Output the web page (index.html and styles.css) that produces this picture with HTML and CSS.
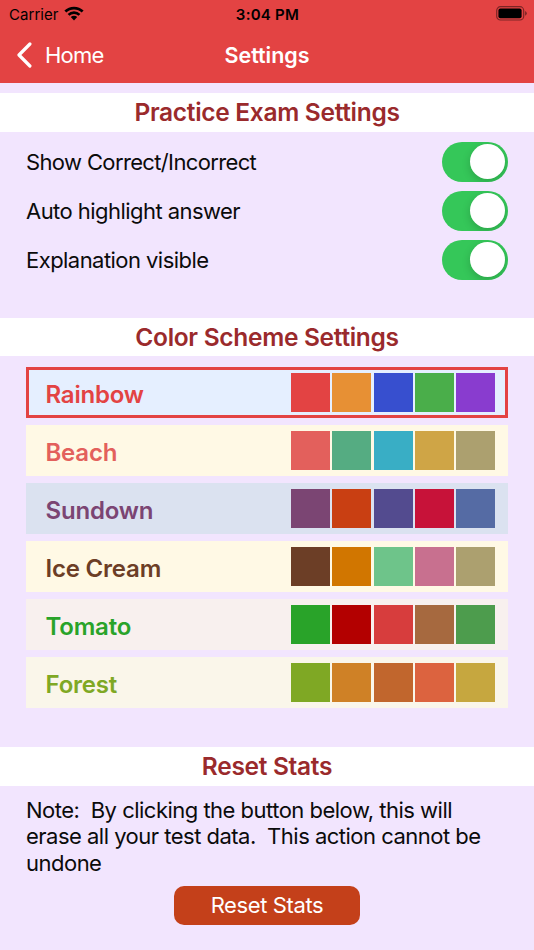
FILE: index.html
```html
<!DOCTYPE html>
<html lang="en">
<head>
<meta charset="UTF-8">
<title>Settings</title>
<link rel="stylesheet" href="styles.css">
</head>

<body>
<div class="top">
  <div class="status">
    <div class="carrier">
      <span>Carrier</span>
      <svg class="wifi" width="20" height="15" viewBox="0 0 20 15">
        <path d="M0.4 4.6 A13.6 13.6 0 0 1 19.6 4.6 L17.7 6.6 A10.9 10.9 0 0 0 2.3 6.6 Z"/>
        <path d="M3.6 7.9 A9.1 9.1 0 0 1 16.4 7.9 L14.5 9.8 A6.4 6.4 0 0 0 5.5 9.8 Z"/>
        <path d="M6.8 11.1 A4.6 4.6 0 0 1 13.2 11.1 L10 14.4 Z"/>
      </svg>
    </div>
    <div class="time">3:04 PM</div>
    <svg class="battery" width="32" height="15" viewBox="0 0 32 15">
      <rect x="0.7" y="0.7" width="27" height="13.3" rx="3.8" fill="none" stroke="#000" stroke-opacity=".45" stroke-width="1.2"/>
      <rect x="2.4" y="2.4" width="23.2" height="9.9" rx="2" fill="#000"/>
      <path d="M29.2 5 A2.6 2.6 0 0 1 29.2 9.7 Z" fill="#000" fill-opacity=".5"/>
    </svg>
  </div>
  <div class="nav">
    <div class="back">
      <svg width="16" height="26" viewBox="0 0 16 26">
        <path d="M13.9 2 L3 13 L13.9 24" fill="none" stroke="#fff" stroke-width="3.2" stroke-linecap="round" stroke-linejoin="round"/>
      </svg>
      <span>Home</span>
    </div>
    <h1>Settings</h1>
  </div>
</div>

<h2>Practice Exam Settings</h2>
<ul class="options">
  <li><span class="correct">Show Correct/Incorrect</span><i class="switch"></i></li>
  <li><span>Auto highlight answer</span><i class="switch"></i></li>
  <li><span>Explanation visible</span><i class="switch"></i></li>
</ul>

<h2 class="h-color">Color Scheme Settings</h2>
<ul class="schemes">
  <li class="rainbow selected"><span>Rainbow</span><div class="colors"><i></i><i></i><i></i><i></i><i></i></div></li>
  <li class="beach"><span>Beach</span><div class="colors"><i></i><i></i><i></i><i></i><i></i></div></li>
  <li class="sundown"><span>Sundown</span><div class="colors"><i></i><i></i><i></i><i></i><i></i></div></li>
  <li class="icecream"><span>Ice Cream</span><div class="colors"><i></i><i></i><i></i><i></i><i></i></div></li>
  <li class="tomato"><span>Tomato</span><div class="colors"><i></i><i></i><i></i><i></i><i></i></div></li>
  <li class="forest"><span>Forest</span><div class="colors"><i></i><i></i><i></i><i></i><i></i></div></li>
</ul>

<h2 class="h-reset">Reset Stats</h2>
<p class="note">Note:&nbsp; By clicking the button below, this will<br>erase all your test data.&nbsp; This action cannot be<br>undone</p>
<button class="reset">Reset Stats</button>
</body>
</html>
```

FILE: styles.css
```css
*{ box-sizing:border-box; margin:0; padding:0;}
body{ width:534px; height:950px; overflow:hidden; background:#f2e5fe; color:#0b0b0b; font-family:Inter, "Liberation Sans", sans-serif; font-size:22px;}
ul{ list-style:none;}
i{ display:block;}

/* header */
.top{ height:83px; background:#e34343; color:#fff;}
.status{ display:grid; grid-template-columns:1fr auto 1fr; height:28px; padding:0 6px 0 9px; align-items:center; color:#000; font-size:15px;}
.carrier{ display:flex; gap:5px; align-items:center; letter-spacing:.05px;}
.wifi{ margin-top:-2px;}
.time{ margin-left:-2px; font-weight:600; font-size:15px; letter-spacing:.25px;}
.battery{ justify-self:end; margin-top:-1px;}
.nav{ display:grid; grid-template-columns:1fr auto 1fr; height:53px; padding:0 16px; align-items:center;}
.back{ display:flex; gap:13px; align-items:center; letter-spacing:-.8px;}
h1{ font-size:21.5px; font-weight:600; letter-spacing:-.05px;}

h2{ height:39px; margin-top:10px; background:#fff; color:#9a2a2c; font-size:24.5px; font-weight:600; line-height:39px; text-align:center; letter-spacing:-.3px;}

/* switches */
.options{ padding:10px 26px 0;}
.options li{ display:flex; justify-content:space-between; align-items:center; height:40px; margin-bottom:9px; letter-spacing:-.55px;}
.options span{ padding-bottom:1px;}
.options .correct{ letter-spacing:-.64px;}
.switch{ width:66px; height:40px; padding:2.4px 2.8px; border-radius:20px; background:#35c759; overflow:hidden;}
.switch:after{ content:""; display:block; width:35px; height:35px; margin-left:auto; border-radius:50%; background:#fff; box-shadow:0 3px 9px rgba(0,0,0,.18);}

/* color schemes */
.h-color{ margin-top:37.7px; height:38.5px; line-height:38.5px;}
.schemes{ padding:10.4px 26px 0;}
.schemes li{ display:flex; justify-content:space-between; align-items:center; height:51.4px; margin-bottom:6.6px; padding:0 13px 0 20px; font-size:24px; font-weight:600; letter-spacing:-.2px;}
.schemes span{ padding-top:4px; margin-left:-.5px;}
.schemes li.selected{ border:3px solid #e34343; padding:0 10px 0 17px;}
.colors{ display:flex; gap:2.2px;}
.colors i{ width:39px; height:39px;}

.rainbow{ background:#e5efff; color:#e34343;}
.rainbow i:nth-child(1){ background:#e34343;}
.rainbow i:nth-child(2){ background:#e79034;}
.rainbow i:nth-child(3){ background:#374fcf;}
.rainbow i:nth-child(4){ background:#4aae4a;}
.rainbow i:nth-child(5){ background:#893ccf;}

.beach{ background:#fff9e5; color:#e3605c;}
.beach i:nth-child(1){ background:#e3605c;}
.beach i:nth-child(2){ background:#55ac82;}
.beach i:nth-child(3){ background:#39aec5;}
.beach i:nth-child(4){ background:#cfa546;}
.beach i:nth-child(5){ background:#aca06f;}

.sundown{ background:#dbe2f0; color:#7b4573;}
.sundown i:nth-child(1){ background:#7b4573;}
.sundown i:nth-child(2){ background:#c93f12;}
.sundown i:nth-child(3){ background:#534b8f;}
.sundown i:nth-child(4){ background:#c71239;}
.sundown i:nth-child(5){ background:#556ba4;}

.icecream{ background:#fff9e5; color:#6c3e26;}
.icecream i:nth-child(1){ background:#6c3e26;}
.icecream i:nth-child(2){ background:#d17600;}
.icecream i:nth-child(3){ background:#6ec48a;}
.icecream i:nth-child(4){ background:#c8708f;}
.icecream i:nth-child(5){ background:#aca06f;}

.tomato{ background:#f8f0ee; color:#29a329;}
.tomato i:nth-child(1){ background:#29a329;}
.tomato i:nth-child(2){ background:#b30000;}
.tomato i:nth-child(3){ background:#d73d3d;}
.tomato i:nth-child(4){ background:#a6693f;}
.tomato i:nth-child(5){ background:#4d9c4d;}

.forest{ background:#faf6ea; color:#7fa824;}
.forest i:nth-child(1){ background:#7fa824;}
.forest i:nth-child(2){ background:#cf8126;}
.forest i:nth-child(3){ background:#c1662d;}
.forest i:nth-child(4){ background:#dc633f;}
.forest i:nth-child(5){ background:#c6a73f;}

/* reset */
.h-reset{ margin-top:39.4px;}
.note{ padding:11px 26px 0; line-height:26.2px; letter-spacing:-.51px;}
.reset{ display:block; width:186px; height:39px; margin:10px auto 0; border:0; border-radius:10px; background:#c4401a; color:#fff; font-family:inherit; font-size:22px; letter-spacing:-.38px;}
```
